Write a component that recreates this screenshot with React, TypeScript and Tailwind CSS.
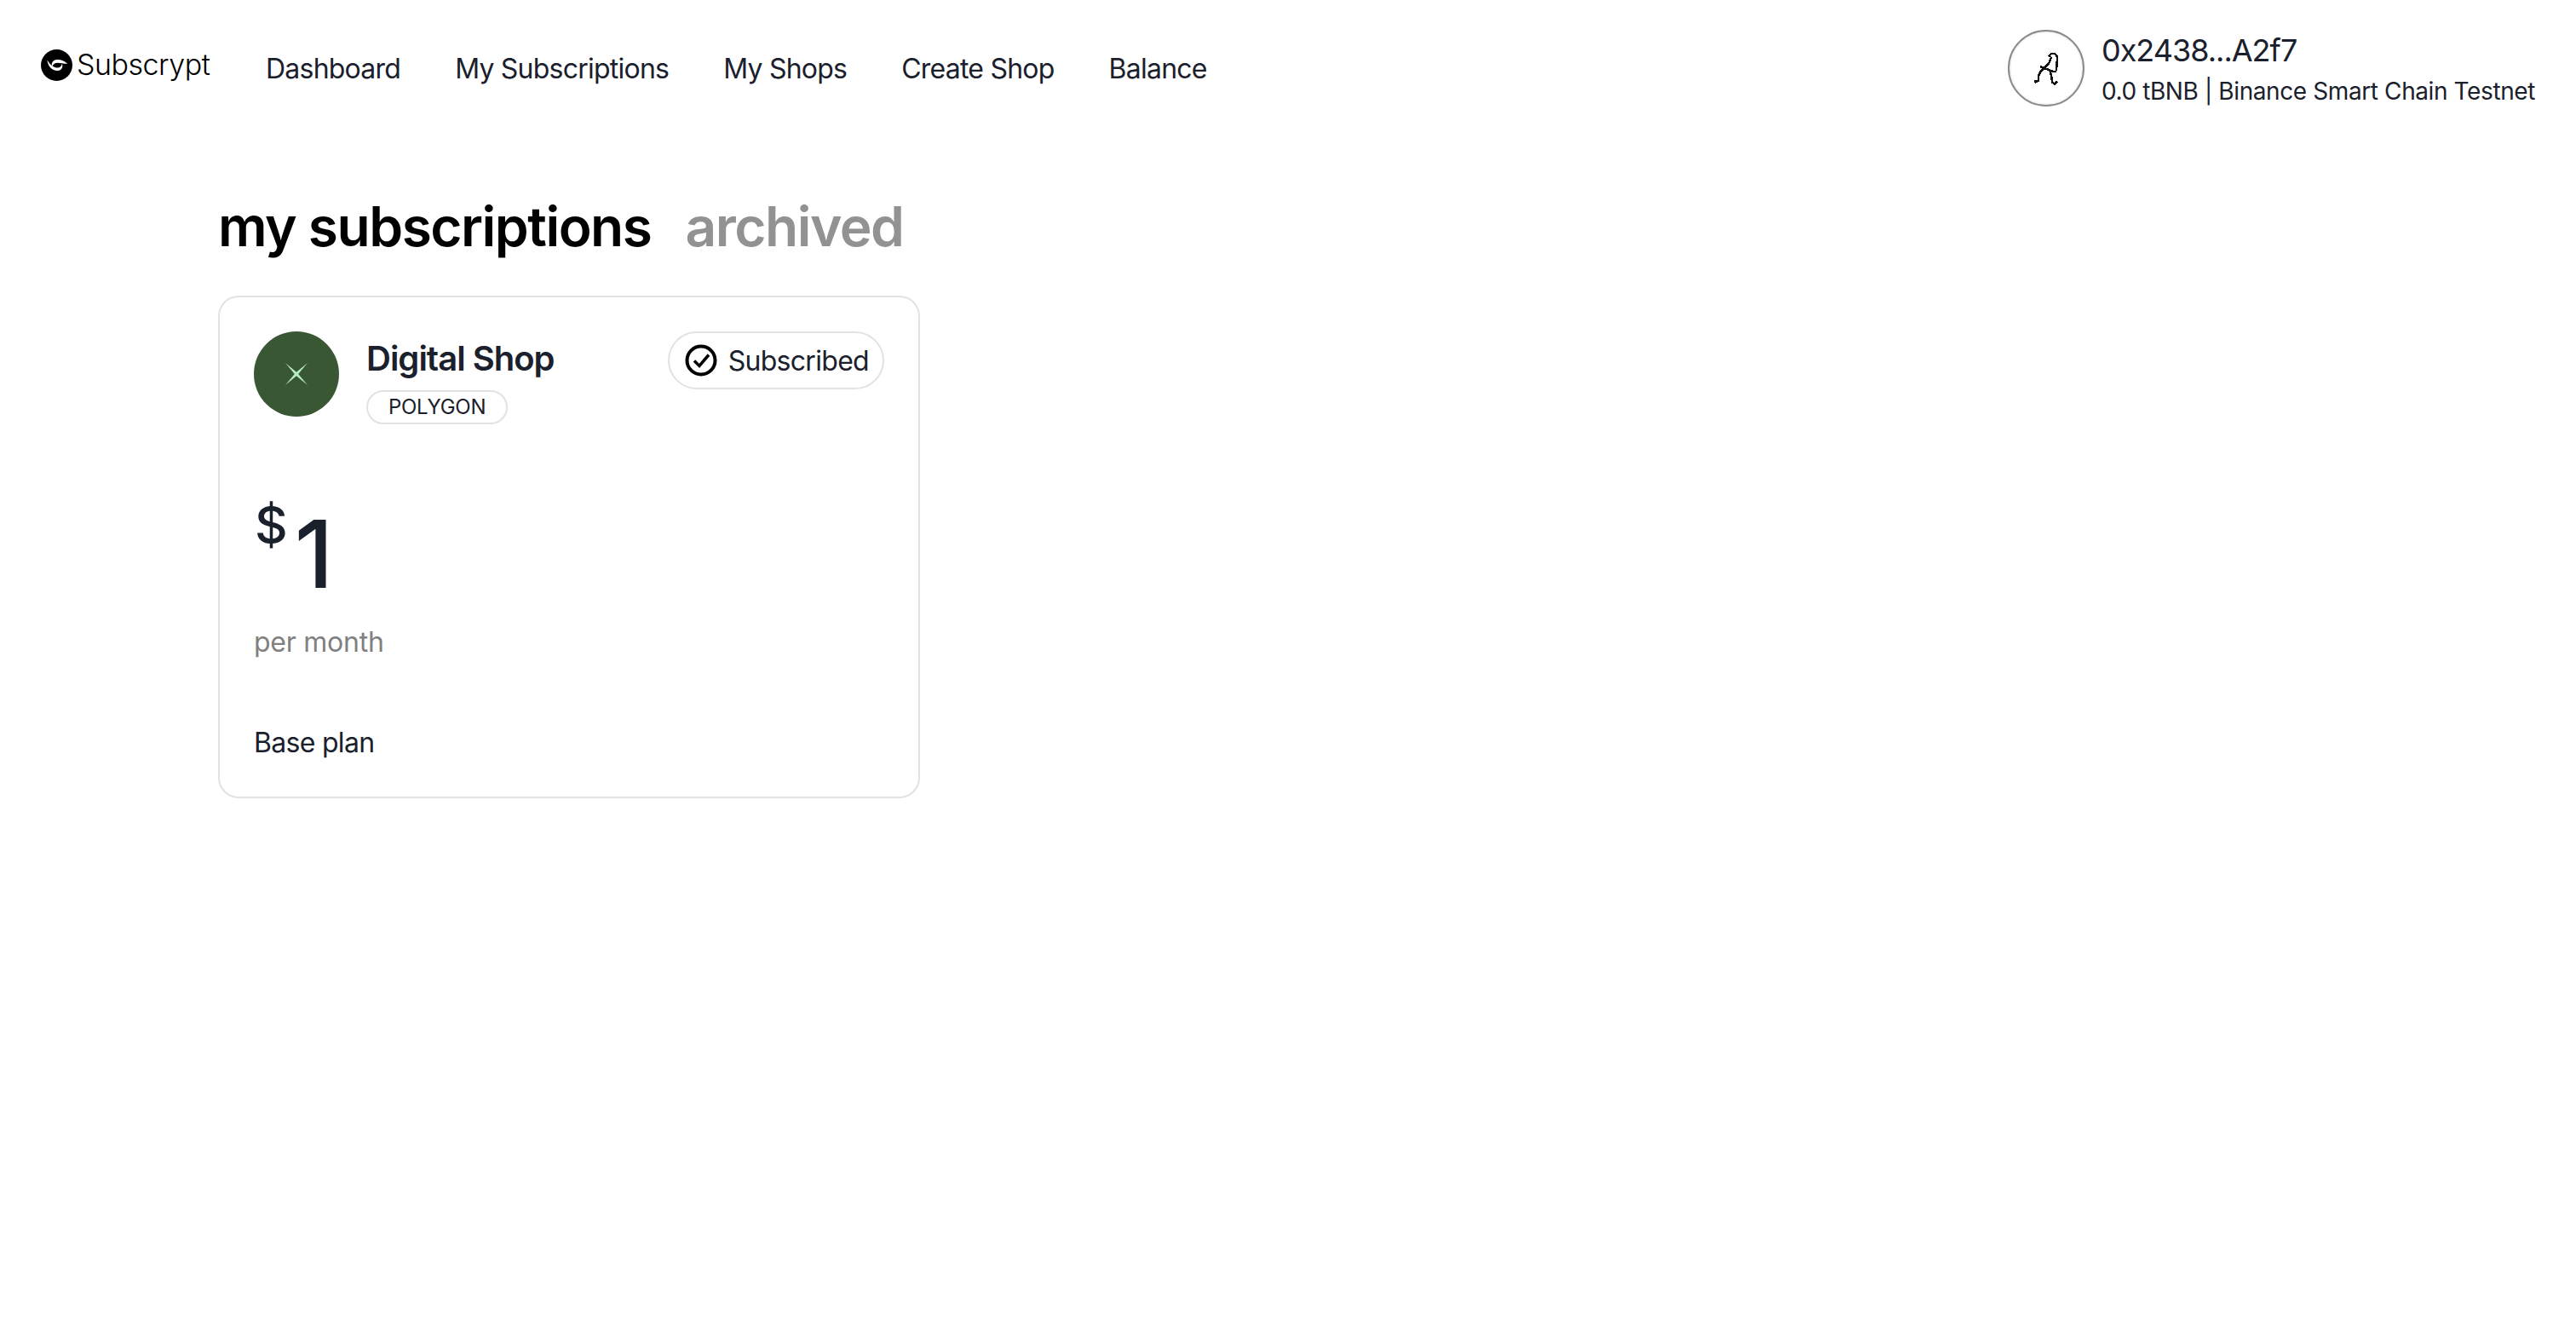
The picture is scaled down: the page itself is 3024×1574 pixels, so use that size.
import React from 'react';

const navItems = ['Dashboard', 'My Subscriptions', 'My Shops', 'Create Shop', 'Balance'];

const Logo = () => (
  <svg viewBox="40 38 110 110" className="w-[37px] h-[37px] shrink-0">
    <circle cx="95" cy="93" r="55" fill="#000" />
    <path d="M62 75C65 97 78 112 98 112 113 112 118 100 114 88 111 99 104 103 96 102 82 100 72 90 62 75z" fill="#fff" />
    <path d="M133 88C122 78 110 73 96 74 82 75 75 86 79 98 83 89 90 85 98 85 110 85 122 89 133 88z" fill="#fff" />
  </svg>
);

// pixelated squiggle in the wallet avatar
const Avatar = () => (
  <div className="w-[90px] h-[90px] rounded-full border-2 border-[#8a8a8a] shadow-[inset_0_0_3px_rgba(0,0,0,0.15)] flex items-center justify-center shrink-0">
    <svg viewBox="100 85 92 125" className="w-[30px] h-[41px]" fill="none" stroke="#111" strokeWidth="7.500" shapeRendering="crispEdges">
      <path d="M155 105l10-12h12l9 12-3 50" />
      <path d="M165 105l-10 25-15 15-15 15-6 12v18l-12 6-3-6" />
      <path d="M125 140l25 10 20 8h14" />
      <path d="M160 155l5 20 3 22 9 6 9-9" />
    </svg>
  </div>
);

const App = () => {
  return (
    <div className="min-h-screen bg-white font-['Inter',sans-serif] text-[#1a202c]">
      <header className="flex items-start justify-between pt-[31px] pl-[48px] pr-[48px]">
        <div className="flex items-start pt-[21px]">
          <div className="flex items-center w-[200px] h-[48px]">
            <Logo />
            <span className="ml-[5px] text-[34px] leading-[48px] font-light text-black tracking-[-0.5px]">Subscrypt</span>
          </div>
          <nav className="flex items-center gap-[64px] ml-[64px] mt-[5px]">
            {navItems.map((item) => (
              <a key={item} className="text-[32px] leading-[48px] tracking-[-0.77px]">{item}</a>
            ))}
          </nav>
        </div>
        <div className="flex items-center gap-[20px]">
          <Avatar />
          <div className="pt-[4px]">
            <div className="text-[36px] leading-[48px] tracking-[-1px]">0x2438...A2f7</div>
            <div className="mt-[2px] text-[28px] leading-[44px] tracking-[-0.4px]">0.0 tBNB | Binance Smart Chain Testnet</div>
          </div>
        </div>
      </header>

      <main className="pl-[256px] pt-[91px]">
        <div className="flex items-center gap-[40px] h-[92px]">
          <h1 className="text-[64px] leading-[92px] font-semibold text-black tracking-[-1.5px]">my subscriptions</h1>
          <h2 className="text-[64px] leading-[92px] font-semibold text-[#929292] tracking-[-1.5px]">archived</h2>
        </div>

        <div className="mt-[35px] w-[824px] h-[590px] border-2 border-[#e2e2e2] rounded-[24px] px-[40px] pt-[40px]">
          <div className="flex items-start justify-between">
            <div className="flex items-start gap-[32px]">
              <div className="w-[100px] h-[100px] rounded-full bg-[#3a5733] flex items-center justify-center">
                <svg viewBox="0 0 26 26" className="w-[26px] h-[26px]" fill="#b4ecc0">
                  <path d="M0 0L13 10.800 26 0 15.200 13 26 26 13 15.200 0 26 10.800 13z" />
                </svg>
              </div>
              <div>
                <div className="mt-[2px] text-[40px] leading-[60px] font-semibold tracking-[-1px]">Digital Shop</div>
                <div className="mt-[7px] inline-flex items-center h-[40px] px-[24px] rounded-full border-2 border-[#e2e2e2] text-[24px] tracking-[-0.3px]">POLYGON</div>
              </div>
            </div>
            <div className="flex items-center h-[68px] pl-[18px] pr-[16px] rounded-full border-2 border-[#e2e2e2] gap-[13px] text-[32px] tracking-[-0.7px]">
              <svg viewBox="0 0 38 38" className="w-[38px] h-[38px]" fill="none" stroke="#000">
                <circle cx="19" cy="19" r="16.500" strokeWidth="4" />
                <path d="M11 19.500l6 6 11-13" strokeWidth="3.500" />
              </svg>
              <span className="pt-[2px]">Subscribed</span>
            </div>
          </div>

          <div className="flex items-start mt-[86px] h-[125px]">
            <span className="text-[60px] leading-[64px] ml-[1px] font-medium">$</span>
            <span className="text-[110px] leading-[120px] ml-[8px] mt-[6px] font-medium">1</span>
          </div>
          <div className="mt-[21px] text-[32px] leading-[48px] text-[#808080] tracking-[-0.25px]">per month</div>
          <div className="mt-[70px] text-[32px] leading-[48px] tracking-[-0.7px]">Base plan</div>
        </div>
      </main>
    </div>
  );
};

export default App;
